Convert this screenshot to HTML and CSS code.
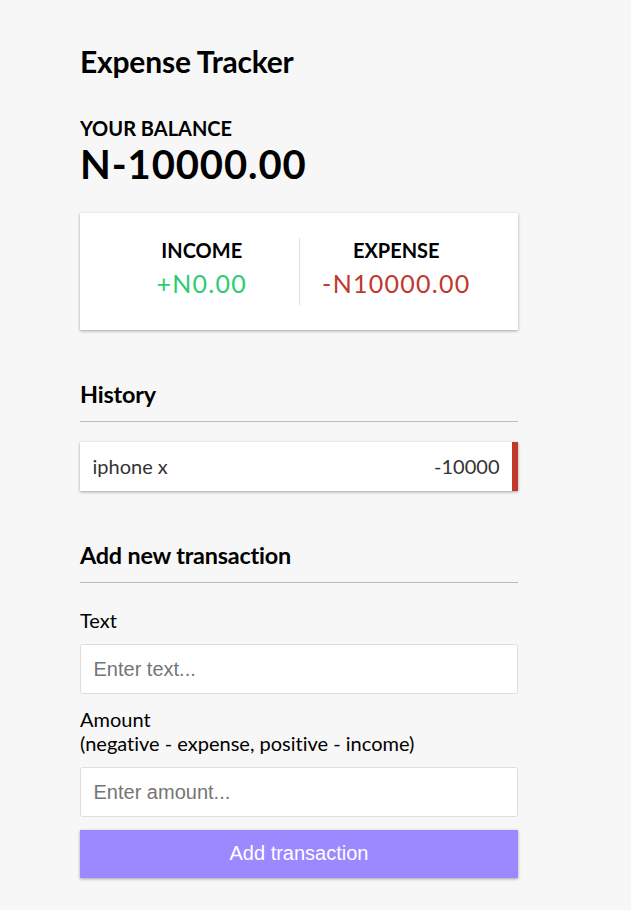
FILE: index.html
```html
<!DOCTYPE html>
<html lang="en">
<head>
<meta charset="UTF-8">
<title>Expense Tracker</title>
<link rel="stylesheet" href="styles.css">
</head>
<body>
  <div class="container">
    <h2 class="app-title">Expense Tracker</h2>
    <h4 class="label-caps">Your Balance</h4>
    <h1 class="balance">N-10000.00</h1>

    <div class="inc-exp-container">
      <div class="inc-col">
        <h4 class="label-caps">Income</h4>
        <p class="money plus">+N0.00</p>
      </div>
      <div class="inc-col">
        <h4 class="label-caps">Expense</h4>
        <p class="money minus">-N10000.00</p>
      </div>
    </div>

    <h3 class="section-title">History</h3>
    <ul class="list">
      <li class="list-item minus">
        <span>iphone x</span>
        <span>-10000</span>
      </li>
    </ul>

    <h3 class="section-title">Add new transaction</h3>
    <form class="tx-form">
      <div class="form-control">
        <label class="field-label" for="text">Text</label>
        <input class="field-input" type="text" id="text" placeholder="Enter text...">
      </div>
      <div class="form-control">
        <label class="field-label" for="amount">Amount <br>(negative - expense, positive - income)</label>
        <input class="field-input" type="number" id="amount" placeholder="Enter amount...">
      </div>
      <button class="btn" type="button">Add transaction</button>
    </form>
  </div>
</body>
</html>
```

FILE: styles.css
```css
* {
  box-sizing: border-box;
}

body {
  background-color: #f7f7f7;
  margin: 0;
  padding: 0 80px;
  font-family: Lato, "Noto Sans", sans-serif;
  font-size: 20px;
  color: #000;
  font-variant-ligatures: none;
}

.container {
  width: 438px;
}

.app-title {
  font-size: 30px;
  margin: 43px 0 37px;
  font-weight: 700;
  letter-spacing: -0.2px;
}

.label-caps {
  margin: 0;
  font-size: 20px;
  text-transform: uppercase;
  font-weight: 700;
}

.balance {
  margin: 0;
  font-size: 40px;
  letter-spacing: 0.9px;
  font-weight: 700;
}

.inc-exp-container {
  background-color: #fff;
  box-shadow: 0 1.25px 3.75px rgba(0, 0, 0, 0.12), 0 1.25px 2.5px rgba(0, 0, 0, 0.24);
  padding: 25px;
  display: flex;
  justify-content: space-between;
  margin: 25px 0;
}

.inc-col {
  flex: 1;
  text-align: center;
}

.inc-col:first-of-type {
  border-right: 1px solid #dedede;
}

.money {
  font-size: 25px;
  letter-spacing: 1.25px;
  margin: 6.25px 0;
}

.money.plus {
  color: #2ecc71;
}

.money.minus {
  color: #c0392b;
}

.section-title {
  font-size: 23.4px;
  font-weight: 700;
  letter-spacing: -0.2px;
  border-bottom: 1px solid #bbb;
  padding-bottom: 13px;
  margin: 50px 0 12.5px;
}

.list {
  list-style-type: none;
  padding: 0;
  margin: 20px 0 50px;
}

.list-item {
  background-color: #fff;
  box-shadow: 0 1.25px 3.75px rgba(0, 0, 0, 0.12), 0 1.25px 2.5px rgba(0, 0, 0, 0.24);
  color: #333;
  display: flex;
  justify-content: space-between;
  padding: 12.5px;
  margin: 12.5px 0;
}

.list-item.minus {
  border-right: 6.25px solid #c0392b;
}

.tx-form {
  margin: 0;
}

.field-label {
  display: inline-block;
  margin: 12.5px 0;
}

.field-input {
  border: 1px solid #dedede;
  border-radius: 2.5px;
  display: block;
  font-family: "Liberation Sans", Arial, sans-serif;
  font-size: 20px;
  padding: 12.5px;
  width: 100%;
  margin: 0;
}

.field-input::placeholder {
  color: #757575;
}

.btn {
  cursor: pointer;
  background-color: #9c88ff;
  box-shadow: 0 1.25px 3.75px rgba(0, 0, 0, 0.12), 0 1.25px 2.5px rgba(0, 0, 0, 0.24);
  color: #fff;
  border: 0;
  display: block;
  font-family: "Liberation Sans", Arial, sans-serif;
  font-size: 20px;
  margin: 12.5px 0 20px;
  padding: 12.5px;
  width: 100%;
}
```
